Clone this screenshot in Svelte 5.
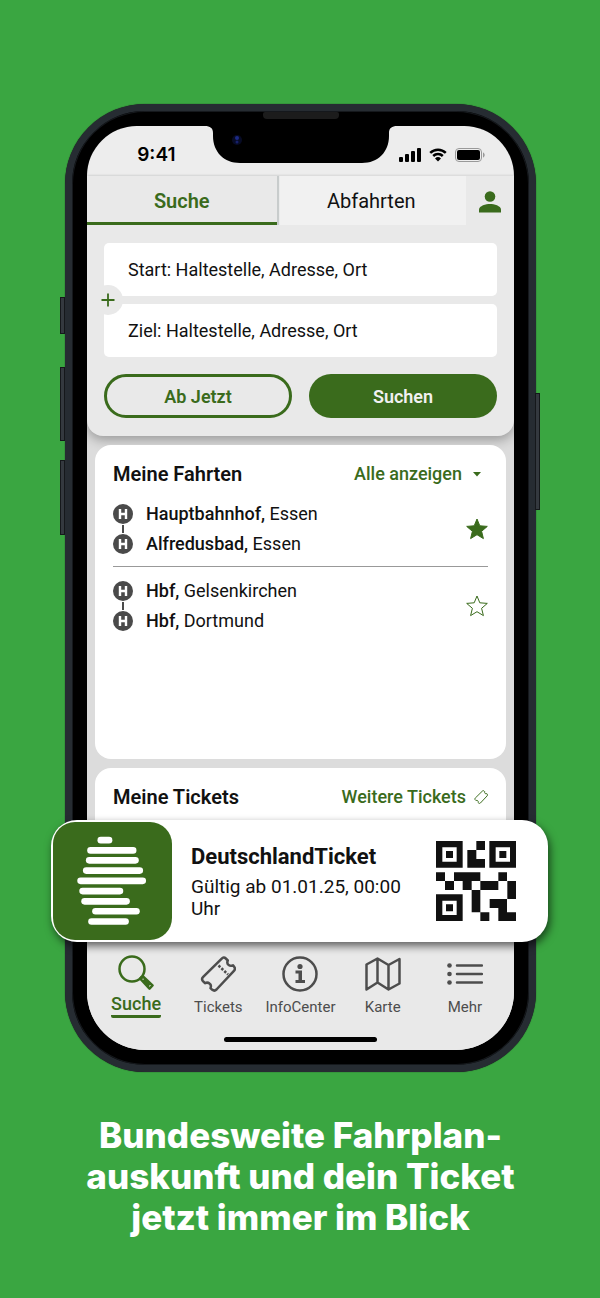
<script>
  let activeTab = $state('suche')
  let activeNav = $state('Suche')
  let start = $state('')
  let ziel = $state('')

  let trips = $state([
    { id: 1, from: 'Hauptbahnhof,', fromCity: 'Essen', to: 'Alfredusbad,', toCity: 'Essen', favorite: true },
    { id: 2, from: 'Hbf,', fromCity: 'Gelsenkirchen', to: 'Hbf,', toCity: 'Dortmund', favorite: false }
  ])

  const navItems = ['Suche', 'Tickets', 'InfoCenter', 'Karte', 'Mehr']

  const ticketOutline = 'M21.500 2.800q2.300-2.300 4.300-.3l2 2q-1.300 3 .9 4.600 2 1.400 4.300.2l1.300 1.700q1.500 2-.6 4.200L16.500 33.500q-2 2-4.200.3l-1.800-1.700q1.200-3-1-4.600-2-1.600-4.500-.3l-2.300-2.400q-1.500-2 .5-4z'

  // bars of the ticket logo: left, right, y
  const bars = [
    [143, 168, 55],
    [112, 241, 86],
    [108, 248, 116],
    [99, 261, 147],
    [82, 270, 178],
    [88, 201, 209],
    [94, 221, 240],
    [127, 251, 270],
    [115, 218, 301]
  ]
</script>

<main class="page">
  <div class="phone">
    <span class="side-button mute"></span>
    <span class="side-button volume-up"></span>
    <span class="side-button volume-down"></span>
    <span class="side-button power"></span>
    <span class="speaker"></span>

    <div class="screen">
      <div class="status-bar">
        <span class="time">9:41</span>
        <svg class="notch" viewBox="0 0 192 38" aria-hidden="true">
          <path d="M0 0h192c-5 0-8 2-8 7v3c0 16-11 27-27 27H35C19 37 8 26 8 10V7c0-5-3-7-8-7z" fill="#000" />
          <circle cx="32" cy="14" r="5" fill="#070b25" />
          <circle cx="32" cy="12" r="2" fill="#1c2a86" />
          <circle cx="32" cy="16" r="1.5" fill="#16206a" />
        </svg>
        <div class="status-icons">
          <svg width="22" height="14" viewBox="0 0 22 14" aria-hidden="true">
            <rect x="0" y="9" width="4" height="5" rx="1" />
            <rect x="6" y="6" width="4" height="8" rx="1" />
            <rect x="12" y="3" width="4" height="11" rx="1" />
            <rect x="18" y="0" width="4" height="14" rx="1" />
          </svg>
          <svg width="18" height="14" viewBox="0 0 18 14" aria-hidden="true">
            <path d="M1.2 4.8a11.2 11.2 0 0 1 15.6 0M4.2 8a6.9 6.9 0 0 1 9.6 0" fill="none" stroke="#000" stroke-width="2.5" />
            <path d="M6 10.4a4.3 4.3 0 0 1 6 0L9 13.6z" />
          </svg>
          <svg width="30" height="14" viewBox="0 0 30 14" aria-hidden="true">
            <rect x="0.5" y="0.5" width="26" height="13" rx="3.5" fill="none" stroke="#999" />
            <rect x="2" y="2" width="23" height="10" rx="2" />
            <path d="M28 4.5c1 .3 1.7 1.3 1.7 2.5S29 9.2 28 9.5z" fill="#999" />
          </svg>
        </div>
      </div>

      <div class="tabs">
        <button class="tab" class:active={activeTab === 'suche'} onclick={() => activeTab = 'suche'}>Suche</button>
        <button class="tab" class:active={activeTab === 'abfahrten'} onclick={() => activeTab = 'abfahrten'}>Abfahrten</button>
        <button class="profile" aria-label="Profil">
          <svg width="22" height="22" viewBox="0 0 22 22" aria-hidden="true">
            <circle cx="11" cy="5.5" r="5.3" />
            <path d="M0 21.500v-3c0-3.700 7-5.500 11-5.500s11 1.800 11 5.500v3z" />
          </svg>
        </button>
      </div>

      <form class="search" onsubmit={(e) => e.preventDefault()}>
        <div class="fields">
          <input type="text" aria-label="Start" placeholder="Start: Haltestelle, Adresse, Ort" bind:value={start} />
          <input type="text" aria-label="Ziel" placeholder="Ziel: Haltestelle, Adresse, Ort" bind:value={ziel} />
          <button type="button" class="add" aria-label="Zwischenhalt">
            <svg width="14" height="14" viewBox="0 0 14 14" aria-hidden="true">
              <path d="M7 0.500v13M0.500 7h13" stroke="#3a6b1c" stroke-width="1.8" />
            </svg>
          </button>
        </div>
        <div class="actions">
          <button type="button" class="outline">Ab Jetzt</button>
          <button type="submit" class="filled">Suchen</button>
        </div>
      </form>

      <div class="content">
        <section class="card trips">
          <div class="card-head">
            <h2>Meine Fahrten</h2>
            <button class="link">
              Alle anzeigen
              <svg class="caret" width="8" height="5" viewBox="0 0 8 5" aria-hidden="true"><path d="M0 0h8L4 4.500z" /></svg>
            </button>
          </div>
          {#each trips as trip (trip.id)}
            <div class="trip">
              <svg width="20" height="50" viewBox="0 0 20 50" aria-hidden="true">
                <path d="M10 21v8" stroke="#4a4a4a" stroke-width="2" />
                <circle cx="10" cy="10" r="10" fill="#4a4a4a" />
                <path d="M7 5v10M13 5v10M7 10h6" stroke="#fff" stroke-width="2.4" />
                <circle cx="10" cy="40" r="10" fill="#4a4a4a" />
                <path d="M7 35v10M13 35v10M7 40h6" stroke="#fff" stroke-width="2.4" />
              </svg>
              <div class="names">
                <p><b>{trip.from}</b> {trip.fromCity}</p>
                <p><b>{trip.to}</b> {trip.toCity}</p>
              </div>
              <button class="star" class:filled-star={trip.favorite} aria-label="Favorit" onclick={() => trip.favorite = !trip.favorite}>
                <svg width="22" height="22" viewBox="0 0 22 22" aria-hidden="true">
                  <path d="M11 1l2.800 6.800 7.500.6-5.700 4.900 1.800 7.300L11 16.700l-6.400 3.900 1.800-7.300L.7 8.400l7.500-.6z" />
                </svg>
              </button>
            </div>
          {/each}
        </section>

        <section class="card tickets">
          <div class="card-head">
            <h2>Meine Tickets</h2>
            <button class="link">
              Weitere Tickets
              <svg width="14" height="14" viewBox="0 0 36 36" aria-hidden="true">
                <path d={ticketOutline} fill="none" stroke="#3a6b1c" stroke-width="2.5" />
              </svg>
            </button>
          </div>
        </section>
      </div>

      <article class="ticket">
        <svg class="logo" viewBox="0 0 357 357" aria-hidden="true">
          {#each bars as [x1, x2, y]}
            <line {x1} {x2} y1={y} y2={y} />
          {/each}
        </svg>
        <div class="ticket-text">
          <h3>DeutschlandTicket</h3>
          <p>Gültig ab 01.01.25, 00:00 Uhr</p>
        </div>
        <svg class="qr" viewBox="0 0 240 240" aria-hidden="true">
          <path fill-rule="evenodd" d="M0 0h80v80H0zM19 19v43h43V19zM30 30h21v21H30z" />
          <path fill-rule="evenodd" d="M160 0h80v80h-80zM179 19v43h43V19zM190 30h21v21h-21z" />
          <path fill-rule="evenodd" d="M0 160h80v80H0zM19 179v43h43v-43zM30 190h21v21H30z" />
          <path d="M121 0h26v27h-26zM94 27h27v27h26v26H94zM0 94h27v26H0zM54 94h79v26h-26v27H80v-27H54zM187 94h26v26h-26z" />
          <path d="M27 120h27v27H27zM133 120h54v27h-54zM214 120h26v54h-26zM107 147h26v67h-26zM133 214h27v26h-27z" />
          <path d="M161 174h52v40h27v26h-53v-39h-26z" />
        </svg>
      </article>

      <nav class="bottom-nav">
        <div class="nav-items">
          {#each navItems as item}
            <button class="nav-item" class:current={activeNav === item} onclick={() => activeNav = item}>
              <svg width="36" height="36" viewBox="0 0 36 36" aria-hidden="true">
                {#if item === 'Suche'}
                  <circle cx="14" cy="14" r="12.5" />
                  <path d="M22.500 24l2.500-2.500 9.500 9-3 3.200zM25.500 24.500l6 6M22 22l1.500 1.500" />
                {:else if item === 'Tickets'}
                  <path d={ticketOutline} />
                  <path d="M18.500 9.500l9.500 9" stroke-dasharray="2.5 1.5" />
                {:else if item === 'InfoCenter'}
                  <circle cx="18" cy="18" r="16.5" />
                  <circle class="solid" cx="18" cy="10.5" r="2.6" />
                  <path class="solid" d="M13.500 14.500h6.500v9.500h3v3h-9.500v-3h3v-6.500h-3z" />
                {:else if item === 'Karte'}
                  <path d="M1.500 8.500L12.500 2.500l11 6.500 11-6v24.500l-11 6-11-7-11 7zM12.500 2.500v24M23.500 9v24.500" />
                {:else}
                  <path d="M10 9.500h25M10 18h25M10 26.500h25" stroke-linecap="round" />
                  <circle class="solid" cx="2.5" cy="9.5" r="2.3" />
                  <circle class="solid" cx="2.5" cy="18" r="2.3" />
                  <circle class="solid" cx="2.5" cy="26.5" r="2.3" />
                {/if}
              </svg>
              <span>{item}</span>
            </button>
          {/each}
        </div>
        <div class="home-indicator"></div>
      </nav>
    </div>
  </div>

  <h1>Bundesweite Fahrplan-<br />auskunft und dein Ticket<br />jetzt immer im Blick</h1>
</main>

<style>
  :global(body) {
    background: #3aa641;
  }

  .page {
    padding: 104px 64px 60px 65px;
    font-family: Roboto, 'Liberation Sans', sans-serif;
    color: #111;
  }

  h1,
  h2,
  h3,
  p {
    margin: 0;
  }

  button {
    padding: 0;
    border: none;
    background: none;
    font-family: inherit;
    color: inherit;
    cursor: pointer;
  }

  svg {
    display: block;
    flex-shrink: 0;
  }

  /* Phone */
  .phone {
    position: relative;
    box-sizing: border-box;
    padding: 15px;
    border: 7px solid #262c32;
    border-radius: 80px;
    background: #000;
    box-shadow: inset 0 0 0 1px #15181c, 0 0 1px #111;
  }

  .side-button {
    position: absolute;
    left: -12px;
    width: 5px;
    border: 1px solid #15181b;
    box-sizing: border-box;
    background: #34393f;
  }

  .mute {
    top: 186px;
    height: 37px;
  }

  .volume-up {
    top: 256px;
    height: 74px;
  }

  .volume-down {
    top: 349px;
    height: 75px;
  }

  .power {
    left: auto;
    right: -11px;
    top: 282px;
    height: 117px;
  }

  .speaker {
    position: absolute;
    top: 1px;
    left: 50%;
    width: 76px;
    height: 7px;
    margin-left: -38px;
    border-radius: 2px 2px 4px 4px;
    background: #1c1c1c;
  }

  .screen {
    border-radius: 58px;
    background: #dcdcdc;
  }

  .status-bar {
    display: grid;
    grid-template-columns: 1fr 192px 1fr;
    height: 50px;
    border-radius: 58px 58px 0 0;
    background: #ededed;
  }

  .time {
    padding: 17px 29px 0 0;
    font: 600 19px/24px Inter, sans-serif;
    text-align: right;
    color: #000;
  }

  .notch {
    width: 192px;
    height: 38px;
  }

  .status-icons {
    display: flex;
    gap: 8px;
    padding: 22px 0 0 2px;
  }

  /* Tabs */
  .tabs {
    display: grid;
    grid-template-columns: 1fr 1fr 48px;
    height: 49px;
    background: #e9e9e9;
    box-shadow: 0 -1px 2px rgba(0, 0, 0, 0.1);
  }

  .tab {
    padding-top: 3px;
    border-bottom: 3px solid transparent;
    background: #f1f1f1;
    font-size: 20px;
  }

  .tab.active {
    position: relative;
    border-bottom-color: #3a6b1c;
    background: #e9e9e9;
    box-shadow: 2px 0 1px #c8cccc;
    font-weight: 600;
    color: #3a6b1c;
  }

  .profile {
    display: flex;
    align-items: center;
    justify-content: center;
    padding-top: 2px;
    fill: #3a6b1c;
  }

  /* Search form */
  .search {
    position: relative;
    padding: 18px 17px;
    border-radius: 0 0 16px 16px;
    background: #e9e9e9;
    box-shadow: 0 4px 12px rgba(0, 0, 0, 0.3);
    clip-path: inset(0 0 -30px 0);
  }

  .fields {
    position: relative;
    display: grid;
    gap: 8px;
  }

  input {
    box-sizing: border-box;
    width: 100%;
    height: 53px;
    padding: 0 24px;
    border: none;
    border-radius: 5px;
    background: #fff;
    font-family: inherit;
    font-size: 18px;
    color: #111;
  }

  input::placeholder {
    color: #111;
    opacity: 1;
  }

  .add {
    position: absolute;
    top: 42px;
    left: -11px;
    display: flex;
    align-items: center;
    justify-content: center;
    width: 30px;
    height: 30px;
    border-radius: 50%;
    background: #e9e9e9;
  }

  .actions {
    display: grid;
    grid-template-columns: 1fr 1fr;
    gap: 17px;
    margin-top: 17px;
  }

  .actions button {
    height: 44px;
    border-radius: 22px;
    font-size: 18px;
    font-weight: 600;
  }

  .actions .outline {
    border: 3px solid #3a6b1c;
    color: #3a6b1c;
  }

  .actions .filled {
    background: #3a6b1c;
    color: #f1f1f1;
  }

  /* Cards */
  .content {
    display: grid;
    gap: 9px;
    padding: 9px 8px 0;
  }

  .card {
    position: relative;
    padding: 17px 18px 0;
    border-radius: 16px;
    background: #fff;
  }

  .trips {
    min-height: 297px;
  }

  .tickets {
    min-height: 35px;
    border-radius: 16px 16px 0 0;
  }

  .card-head {
    display: flex;
    align-items: center;
    justify-content: space-between;
    height: 24px;
  }

  .trips .card-head {
    margin-bottom: 4px;
  }

  h2 {
    font-size: 20px;
    font-weight: 600;
    line-height: 24px;
  }

  .link {
    display: flex;
    align-items: center;
    gap: 8px;
    font-size: 18px;
    font-weight: 500;
    line-height: 24px;
    color: #3a6b1c;
    fill: #3a6b1c;
  }

  .caret {
    margin: 0 7px 0 3px;
  }

  .trip {
    display: flex;
    align-items: center;
    gap: 13px;
    padding: 14px 0 12px;
    border-bottom: 1px solid #999;
  }

  .trip:last-child {
    border-bottom: none;
  }

  .names {
    flex: 1;
    margin: -5px 0;
    font-size: 18px;
    line-height: 30px;
  }

  .names b {
    font-weight: 500;
  }

  .star {
    fill: none;
    stroke: #3a6b1c;
  }

  .filled-star {
    fill: #3a6b1c;
  }

  /* Ticket on top of the phone */
  .ticket {
    position: relative;
    display: flex;
    align-items: center;
    margin: 0 -34px 0 -36px;
    padding: 2px 32px 2px 2px;
    border-radius: 26px;
    background: #fff;
    box-shadow: 2px 4px 8px rgba(0, 0, 0, 0.6);
  }

  .logo {
    width: 119px;
    height: 118px;
    border-radius: 22px;
    background: #3a6b1c;
    stroke: #fff;
    stroke-width: 20;
    stroke-linecap: round;
  }

  .ticket-text {
    flex: 1;
    padding: 0 20px 0 19px;
  }

  h3 {
    font-size: 22px;
    font-weight: 700;
    line-height: 30px;
  }

  .ticket-text p {
    padding-top: 4px;
    font-size: 19px;
    line-height: 22px;
  }

  .qr {
    width: 80px;
    height: 80px;
    fill: #111;
  }

  /* Bottom navigation */
  .bottom-nav {
    padding: 12px 8px 8px;
    border-radius: 0 0 58px 58px;
    background: #e9e9e9;
  }

  .nav-items {
    display: grid;
    grid-template-columns: repeat(5, 1fr);
    height: 83px;
  }

  .nav-item {
    display: flex;
    flex-direction: column;
    align-items: center;
    gap: 4px;
    padding-top: 2px;
    font-size: 15px;
    line-height: 22px;
    color: #4d4d4d;
  }

  .nav-item svg {
    fill: none;
    stroke: currentColor;
    stroke-width: 2.5;
    stroke-linejoin: round;
  }

  .nav-item .solid {
    fill: currentColor;
    stroke: none;
  }

  .nav-item.current {
    gap: 2px;
    padding-top: 1px;
    font-size: 18px;
    font-weight: 500;
    color: #3a6b1c;
  }

  .nav-item.current span {
    border-bottom: 3px solid #3a6b1c;
    border-radius: 2px;
  }

  .home-indicator {
    width: 153px;
    height: 5px;
    margin: 0 auto;
    border-radius: 3px;
    background: #000;
  }

  h1 {
    margin: 43px -20px 0;
    font: 800 35px/41px Inter, 'Open Sans', sans-serif;
    text-align: center;
    color: #fff;
  }
</style>
